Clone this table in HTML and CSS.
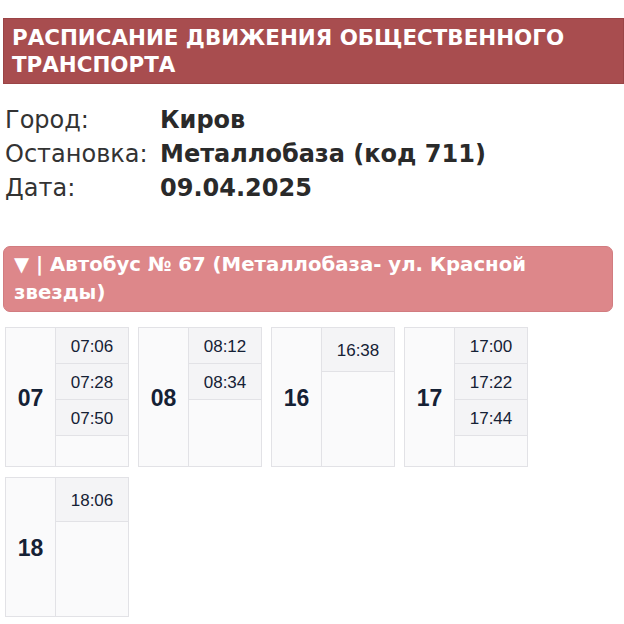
FILE: index.html
```html
<!DOCTYPE html>
<html lang="ru">
<head>
<meta charset="utf-8">
<link rel="stylesheet" href="styles.css">
</head>
<body>
<div class="page">
  <h1 class="title">РАСПИСАНИЕ ДВИЖЕНИЯ ОБЩЕСТВЕННОГО ТРАНСПОРТА</h1>
  <div class="info">
    <div class="row"><span class="label">Город:</span><span class="value">Киров</span></div>
    <div class="row"><span class="label">Остановка:</span><span class="value">Металлобаза (код 711)</span></div>
    <div class="row"><span class="label">Дата:</span><span class="value">09.04.2025</span></div>
  </div>
  <div class="route">▼ | Автобус № 67 (Металлобаза- ул. Красной звезды)</div>
  <div class="grid">
    <div class="block">
      <div class="hour">07</div>
      <div class="mins"><div class="m">07:06</div><div class="m">07:28</div><div class="m">07:50</div></div>
    </div>
    <div class="block">
      <div class="hour">08</div>
      <div class="mins"><div class="m">08:12</div><div class="m">08:34</div></div>
    </div>
    <div class="block">
      <div class="hour">16</div>
      <div class="mins"><div class="m single">16:38</div></div>
    </div>
    <div class="block">
      <div class="hour">17</div>
      <div class="mins"><div class="m">17:00</div><div class="m">17:22</div><div class="m">17:44</div></div>
    </div>
    <div class="block">
      <div class="hour">18</div>
      <div class="mins"><div class="m single">18:06</div></div>
    </div>
  </div>
</div>
</body>
</html>
```

FILE: styles.css
```css
html, body { margin: 0; padding: 0; background: #fff; }
.page { padding: 18px 0 0 3px; }
.title {
  margin: 0;
  background: #a84d4f;
  border: 1px solid #9a4446;
  color: #fff;
  font-family: "DejaVu Sans", Verdana, sans-serif;
  font-weight: bold;
  font-size: 21.4px;
  line-height: 27px;
  padding: 5px 40px 5px 8px;
  height: 54px;
}
.info {
  margin-top: 19px;
  font-family: "DejaVu Sans", Verdana, sans-serif;
  font-size: 24px;
  line-height: 34px;
  color: #333;
  padding-left: 2px;
}
.row { display: flex; }
.label { width: 155px; }
.value { font-weight: bold; color: #2a2a2a; }
.route {
  margin-top: 41px;
  margin-right: 11px;
  background: #dd878a;
  border: 1px solid #d27c80;
  border-radius: 7px;
  color: #fff;
  font-family: "DejaVu Sans", Verdana, sans-serif;
  font-weight: bold;
  font-size: 19.7px;
  line-height: 28px;
  padding: 4px 60px 4px 10px;
  height: 56px;
}
.grid {
  margin-top: 15px;
  padding-left: 2px;
  display: flex;
  flex-wrap: wrap;
  gap: 10px 9px;
  width: 540px;
  font-family: "Liberation Sans", Arial, sans-serif;
  color: #152135;
}
.block {
  width: 122px;
  height: 138px;
  border: 1px solid #e2e2e6;
  background: #fafafb;
  display: flex;
}
.hour {
  width: 50px;
  border-right: 1px solid #e2e2e6;
  display: flex;
  align-items: center;
  justify-content: center;
  font-weight: bold;
  font-size: 23px;
  padding-top: 2px;
  box-sizing: border-box;
}
.mins { flex: 1; display: flex; flex-direction: column; }
.m {
  border-bottom: 1px solid #e2e2e6;
  background: #f4f4f6;
  display: flex;
  align-items: center;
  justify-content: center;
  font-size: 17px;
  padding-top: 2px;
  box-sizing: border-box;
  height: 36px;
}
.m.single { height: 44px; }
```
